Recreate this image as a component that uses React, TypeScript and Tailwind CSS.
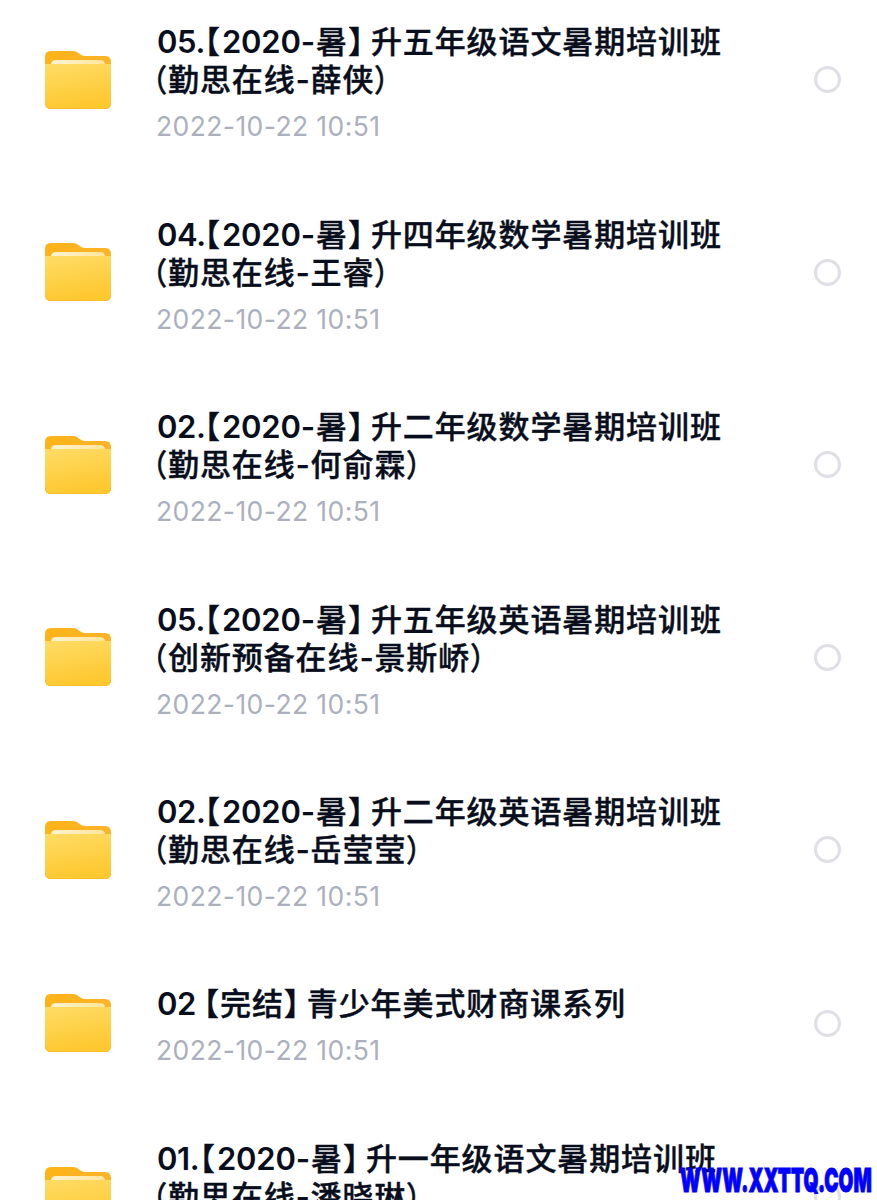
import React from "react";

type Row = { num: string; dotted: boolean; term: string; name: string; second?: string; teacher?: string };

const rows: Row[] = [
  { num: "05.", dotted: true, term: "暑", name: "升五年级语文暑期培训班", second: "勤思在线", teacher: "薛侠" },
  { num: "04.", dotted: true, term: "暑", name: "升四年级数学暑期培训班", second: "勤思在线", teacher: "王睿" },
  { num: "02.", dotted: true, term: "暑", name: "升二年级数学暑期培训班", second: "勤思在线", teacher: "何俞霖" },
  { num: "05.", dotted: true, term: "暑", name: "升五年级英语暑期培训班", second: "创新预备在线", teacher: "景斯峤" },
  { num: "02.", dotted: true, term: "暑", name: "升二年级英语暑期培训班", second: "勤思在线", teacher: "岳莹莹" },
  { num: "02", dotted: false, term: "完结", name: "青少年美式财商课系列" },
  { num: "01.", dotted: true, term: "暑", name: "升一年级语文暑期培训班", second: "勤思在线", teacher: "潘晓琳" },
];

function Folder() {
  return (
    <svg width="68" height="60" viewBox="0 0 68 60" className="block shrink-0">
      <defs>
        <linearGradient id="front" x1="0" y1="0" x2="0.25" y2="1">
          <stop offset="0" stopColor="#ffdc66" />
          <stop offset="1" stopColor="#fec830" />
        </linearGradient>
        <linearGradient id="back" x1="0" y1="0" x2="1" y2="0">
          <stop offset="0" stopColor="#fdb417" />
          <stop offset="1" stopColor="#fbb32a" />
        </linearGradient>
        <linearGradient id="paper" x1="0" y1="0" x2="1" y2="0">
          <stop offset="0" stopColor="#fff3d2" />
          <stop offset="1" stopColor="#ffe59a" />
        </linearGradient>
      </defs>
      <path d="M1 7Q1 1 7 1H29Q32 1 34.500 3L36 4.300Q38 6 41 6H61Q67 6 67 12V30H1Z" fill="url(#back)" />
      <path d="M7 15Q7 10 12 10H56Q61 10 61 15V20H7Z" fill="url(#paper)" />
      <path d="M1 14H67V53Q67 59 61 59H7Q1 59 1 53Z" fill="url(#front)" />
      <path d="M1.500 53Q1.500 58.500 7 58.500H61Q66.500 58.500 66.500 53" fill="none" stroke="#f8bd28" strokeWidth="1" />
    </svg>
  );
}

function Title({ row }: { row: Row }) {
  return (
    <div className="h-[38px] flex whitespace-pre text-[31px] leading-[38px] font-medium tracking-[0.9px] [-webkit-text-stroke:0.4px_#090e1c]">
      <span className={row.dotted ? (row.num === "01." ? "w-[43px]" : "w-[48px]") : "w-[47px]"}>
        <span className="font-semibold tracking-[-0.4px] [-webkit-text-stroke:0px]">{row.num}</span>
      </span>
      <span className="w-[16px] flex justify-end">【</span>
      {row.dotted && (
        <span className="w-[95px] pl-px font-semibold tracking-[-0.2px] [-webkit-text-stroke:0px]">2020-</span>
      )}
      <span>{row.term}</span>
      <span className="w-[23px]">】</span>
      <span>{row.name}</span>
    </div>
  );
}

function Subtitle({ row }: { row: Row }) {
  return (
    <div className="h-[38px] flex whitespace-pre text-[31px] leading-[38px] font-medium tracking-[0.9px] [-webkit-text-stroke:0.4px_#090e1c]">
      <span className="w-[11px] flex justify-end">
        <span className="origin-right scale-x-90">（</span>
      </span>
      <span>{row.second}</span>
      <span className="w-[15px] font-semibold [-webkit-text-stroke:0px]">-</span>
      <span>{row.teacher}</span>
      <span className="origin-left scale-x-90">）</span>
    </div>
  );
}

export default function App() {
  return (
    <div className="relative w-[877px] h-[1200px] overflow-hidden bg-white font-[Inter,'Noto_Sans_CJK_SC',sans-serif]">
      <div className="-mt-[16.5px] flex flex-col">
        {rows.map((row, i) => (
          <div
            key={i}
            className={`flex shrink-0 items-center pl-11 pr-9 ${row.second ? "h-[192.5px]" : "h-[154px]"}`}
          >
            <Folder />
            <div className="ml-[45px] flex-1 pt-[4.5px] text-[#090e1c]">
              <Title row={row} />
              {row.second && <Subtitle row={row} />}
              <div className="mt-[11px] h-[31px] text-[26.5px] leading-[33px] -ml-px tracking-[0.4px] text-[#acb0bd]">2022-10-22 10:51</div>
            </div>
            <span className="size-[27px] shrink-0 rounded-full border-[3px] border-[#dfe0e6]" />
          </div>
        ))}
      </div>
      <div className="absolute left-[680px] top-[1162px] origin-left scale-x-[0.58] whitespace-nowrap text-[33px] leading-[36px] font-black tracking-[0.1px] text-[#0000ff] [-webkit-text-stroke:1px_#0000ff]">
        WWW.XXTTQ.COM
      </div>
    </div>
  );
}
